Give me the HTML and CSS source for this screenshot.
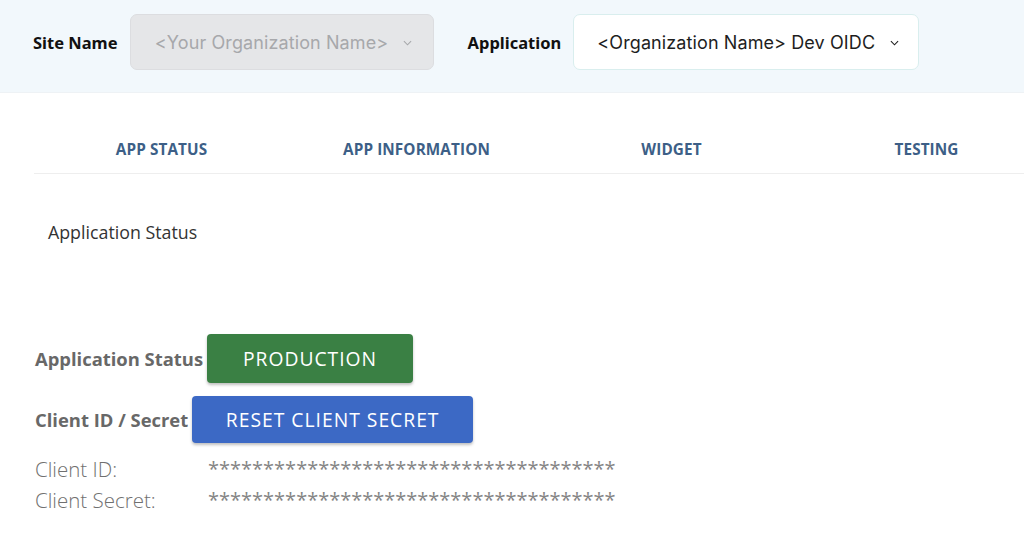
FILE: index.html
```html
<!DOCTYPE html>
<html>
<head>
<meta charset="utf-8">
<link rel="stylesheet" href="styles.css">
</head>
<body>
<header class="topbar">
  <span class="field-label">Site Name</span>
  <div class="select select-disabled">
    <span>&lt;Your Organization Name&gt;</span>
    <svg class="chev" width="9" height="6" viewBox="0 0 10 6"><path d="M1 1l4 4 4-4" fill="none" stroke="currentColor" stroke-width="1.2"/></svg>
  </div>
  <span class="field-label app-label">Application</span>
  <div class="select select-app">
    <span>&lt;Organization Name&gt; Dev OIDC</span>
    <svg class="chev" width="9" height="6" viewBox="0 0 10 6"><path d="M1 1l4 4 4-4" fill="none" stroke="currentColor" stroke-width="1.2"/></svg>
  </div>
</header>
<main class="content">
  <nav class="tabs">
    <div class="tab">APP STATUS</div>
    <div class="tab">APP INFORMATION</div>
    <div class="tab">WIDGET</div>
    <div class="tab">TESTING</div>
  </nav>
  <h2 class="section-title">Application Status</h2>
  <div class="row row-status">
    <span class="row-label">Application Status</span>
    <button class="btn btn-green">PRODUCTION</button>
  </div>
  <div class="row row-secret">
    <span class="row-label">Client ID / Secret</span>
    <button class="btn btn-blue">RESET CLIENT SECRET</button>
  </div>
  <div class="creds">
    <div class="cred"><span class="cred-key">Client ID:</span><span class="cred-val">*************************************</span></div>
    <div class="cred"><span class="cred-key">Client Secret:</span><span class="cred-val">*************************************</span></div>
  </div>
</main>
</body>
</html>
```
FILE: styles.css
```css
html, body {
  margin: 0;
  padding: 0;
  background: #ffffff;
  overflow: hidden;
  font-family: "Open Sans", "Noto Sans", sans-serif;
}
.topbar {
  height: 93px;
  background: #f2f8fc;
  display: flex;
  align-items: center;
  padding-left: 33px;
  padding-bottom: 8px;
  border-bottom: 1px solid #eef2f5;
  box-sizing: border-box;
}
.field-label {
  font-family: "Noto Sans", "Open Sans", sans-serif;
  font-weight: 700;
  font-size: 16.5px;
  color: #111;
  margin-right: 12px;
}
.app-label {
  margin-left: 34px;
}
.select {
  height: 56px;
  box-sizing: border-box;
  border-radius: 7px;
  display: flex;
  align-items: center;
  justify-content: center;
  gap: 15px;
  font-family: "Inter", "Lato", sans-serif;
  font-size: 18px;
  letter-spacing: 0.1px;
}
.select-disabled {
  width: 304px;
  background: #e5e6e8;
  border: 1px solid #dcdde0;
  color: #a7a8ab;
  padding-left: 4px;
}
.select-app {
  width: 346px;
  background: #ffffff;
  border: 1.5px solid #d9eeee;
  color: #1e1e1e;
  padding-left: 4px;
}
.chev { margin-top: 1px; }
.content {
  padding-left: 34px;
}
.tabs {
  width: 1020px;
  display: grid;
  grid-template-columns: repeat(4, 1fr);
  height: 81px;
  border-bottom: 1.5px solid #eeeeee;
  box-sizing: border-box;
}
.tab {
  display: flex;
  align-items: flex-end;
  justify-content: center;
  padding-bottom: 14px;
  font-weight: 700;
  font-size: 15.3px;
  color: #3d5f87;
  letter-spacing: 0.1px;
}
.section-title {
  margin: 46px 0 0 14px;
  font-size: 17.8px;
  font-weight: 400;
  line-height: 24px;
  color: #333;
}
.row {
  display: flex;
  align-items: center;
}
.row-status {
  margin-top: 90px;
}
.row-secret {
  margin-top: 13px;
}
.row-label {
  font-weight: 700;
  font-size: 18.4px;
  color: #686868;
  margin-right: 4px;
  margin-left: 1px;
}
.btn {
  border: none;
  color: #fff;
  font-family: "Open Sans", "Noto Sans", sans-serif;
  font-weight: 500;
  font-size: 19.3px;
  letter-spacing: 1px;
  border-radius: 4px;
  box-shadow: 0 2px 3px rgba(0,0,0,0.25);
  padding: 0;
}
.btn-green {
  background: #3a8044;
  width: 206px;
  height: 49px;
}
.btn-blue {
  background: #3c69c5;
  width: 281px;
  height: 47px;
}
.creds {
  margin-top: 10px;
  margin-left: 1px;
}
.cred {
  display: flex;
  height: 31px;
  align-items: center;
  font-size: 20.5px;
  font-weight: 300;
  color: #707070;
}
.cred-key {
  width: 173px;
}
.cred-val {
  font-size: 20px;
  font-weight: 400;
  letter-spacing: 0px;
  color: #858585;
}
```
